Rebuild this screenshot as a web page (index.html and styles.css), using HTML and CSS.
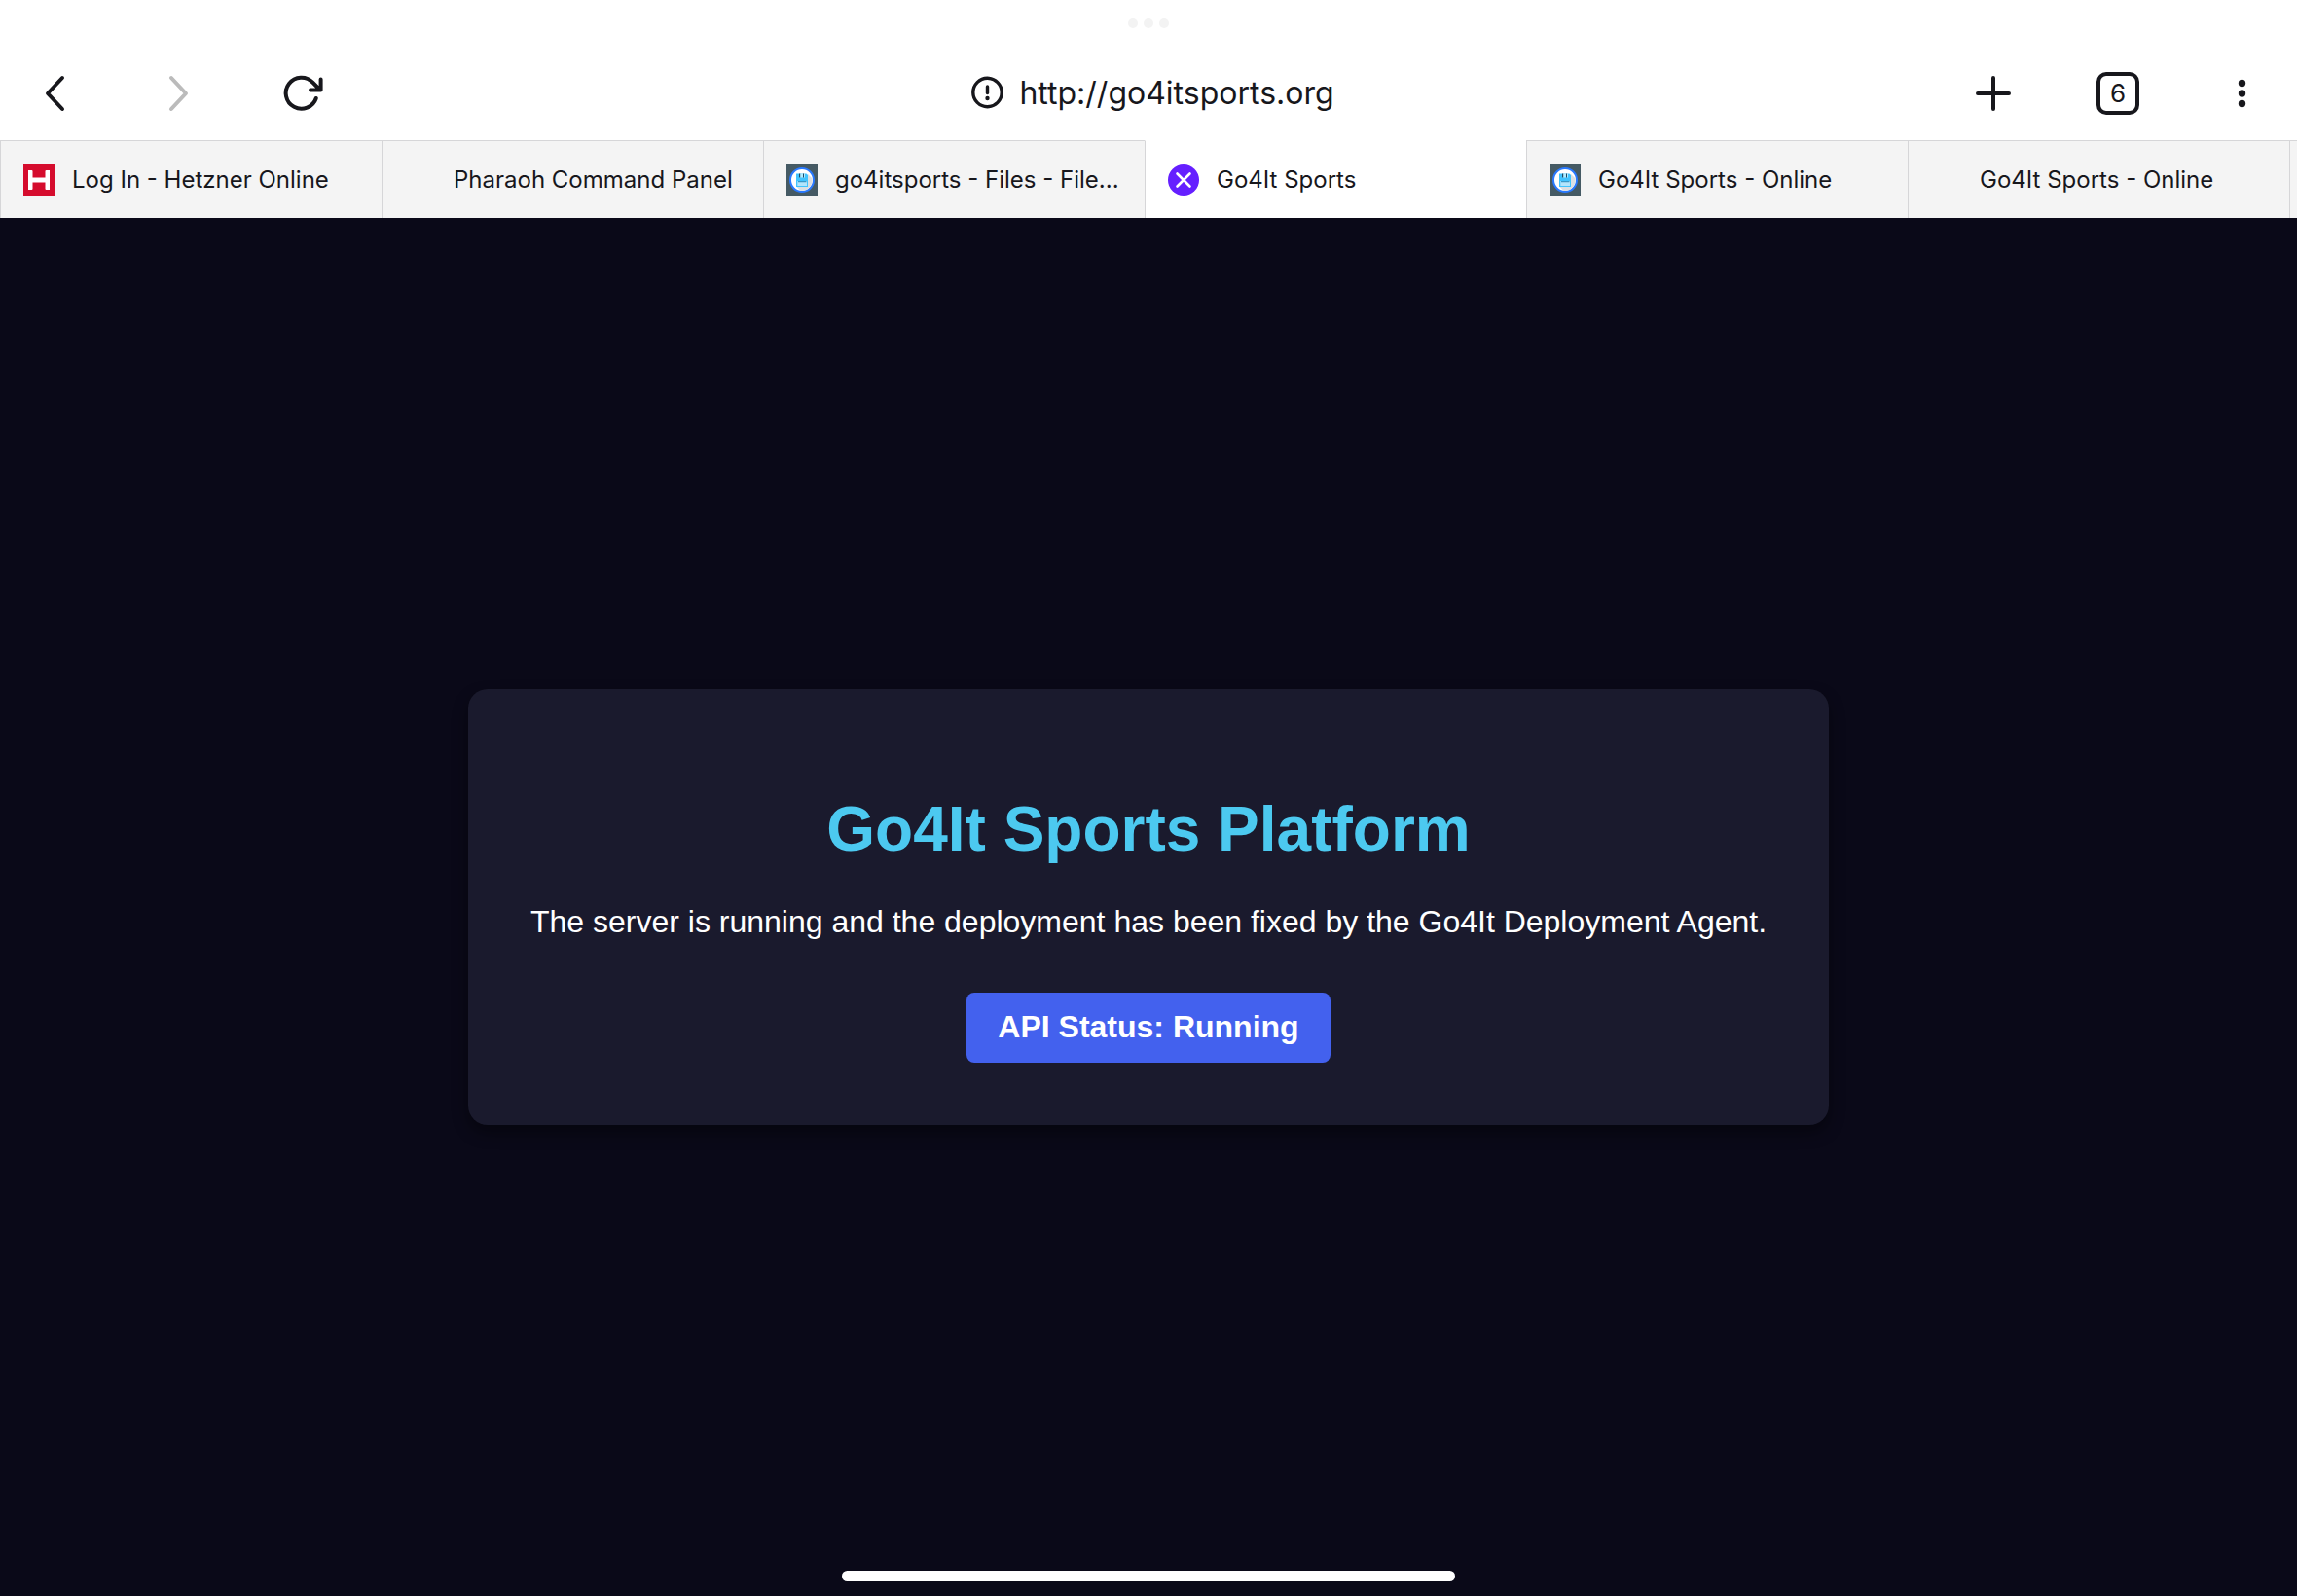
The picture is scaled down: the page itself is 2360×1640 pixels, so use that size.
FILE: index.html
```html
<!DOCTYPE html>
<html lang="en">
<head>
<meta charset="utf-8">
<meta name="viewport" content="width=device-width, initial-scale=1">
<title>Go4It Sports</title>
<link rel="stylesheet" href="styles.css">
</head>
<body>
<svg class="sprite" aria-hidden="true">
  <symbol id="disk" viewBox="0 0 32 32">
    <rect width="32" height="32" fill="#455a64"/>
    <circle cx="16" cy="16" r="12" fill="#fff" stroke="#2979ff" stroke-width="2"/>
    <path d="M22 10l4.600 4.600A11 11 0 0 1 14.500 26.900L10.500 22.900z" fill="#dcdfe2"/>
    <path d="M10 9.500h10.500L22 11V23H10z" fill="#40c4ff"/>
    <rect x="13" y="9.500" width="6" height="4" fill="#b3ecff"/>
    <rect x="13" y="9.500" width="1.200" height="4" fill="#1b4a66"/>
    <rect x="17" y="9.500" width="1" height="4" fill="#1b4a66"/>
    <rect x="11.300" y="17" width="9.700" height="5" fill="#b3e5fc"/>
    <rect x="12" y="17.200" width="8.500" height="1" fill="#1f86b8"/>
  </symbol>
</svg>

<header class="browser">
  <div class="grabber" aria-hidden="true"><span></span><span></span><span></span></div>

  <div class="toolbar">
    <nav class="tools" aria-label="Navigation">
      <button class="tool" type="button" aria-label="Back">
        <svg class="glyph" viewBox="0 0 48 48"><path d="M32 8L17 24L32 40"/></svg>
      </button>
      <button class="tool" type="button" aria-label="Forward" disabled>
        <svg class="glyph" viewBox="0 0 48 48"><path d="M16 8L31 24L16 40"/></svg>
      </button>
      <button class="tool" type="button" aria-label="Reload">
        <svg class="glyph" viewBox="0 0 48 48"><path d="M36.800 29A16 16 0 1 1 33.300 12.700L41 20.500M41.600 9.500V20.500H31"/></svg>
      </button>
    </nav>

    <button class="address" type="button">
      <svg class="info" viewBox="0 0 36 36" aria-hidden="true">
        <circle cx="17.500" cy="17" r="14.700" fill="none" stroke="currentColor" stroke-width="3.400"/>
        <path d="M17.500 11v6.500" stroke="currentColor" stroke-width="3.400" stroke-linecap="round"/>
        <circle cx="17.500" cy="23" r="2.200" fill="currentColor"/>
      </svg>
      <span>http://go4itsports.org</span>
    </button>

    <div class="tools tools-end">
      <button class="tool" type="button" aria-label="New tab">
        <svg class="glyph" viewBox="0 0 48 48"><path d="M24 8V40M8 24H40"/></svg>
      </button>
      <button class="tool" type="button" aria-label="Show 6 open tabs"><span class="count">6</span></button>
      <button class="tool" type="button" aria-label="Menu">
        <svg class="glyph glyph-solid" viewBox="0 0 48 48"><circle cx="23.500" cy="13.500" r="3.700"/><circle cx="23.500" cy="24" r="3.700"/><circle cx="23.500" cy="34.500" r="3.700"/></svg>
      </button>
    </div>
  </div>

  <div class="tabs" role="tablist">
    <button class="tab" type="button" role="tab">
      <svg class="favicon" viewBox="0 0 32 32" aria-hidden="true"><rect width="32" height="32" fill="#d50c2d"/><path d="M5 6h3.500q1 0 1 1v6.500h13V7q0-1 1-1H27v20h-3.500q-1 0-1-1v-6.500h-13V25q0 1-1 1H5z" fill="#fff"/></svg>
      <span class="label">Log In - Hetzner Online</span>
    </button>
    <button class="tab" type="button" role="tab">
      <span class="favicon"></span>
      <span class="label">Pharaoh Command Panel</span>
    </button>
    <button class="tab" type="button" role="tab">
      <svg class="favicon" aria-hidden="true"><use href="#disk"/></svg>
      <span class="label">go4itsports - Files - File...</span>
    </button>
    <button class="tab tab-active" type="button" role="tab" aria-selected="true">
      <svg class="favicon" viewBox="0 0 32 32" aria-hidden="true"><circle cx="16" cy="16" r="16" fill="#651fff"/><path d="M9.500 9.500L22.500 22.500M22.500 9.500L9.500 22.500" stroke="#fff" stroke-width="2.600" stroke-linecap="round"/></svg>
      <span class="label">Go4It Sports</span>
    </button>
    <button class="tab" type="button" role="tab">
      <svg class="favicon" aria-hidden="true"><use href="#disk"/></svg>
      <span class="label">Go4It Sports - Online</span>
    </button>
    <button class="tab" type="button" role="tab">
      <span class="favicon"></span>
      <span class="label">Go4It Sports - Online</span>
    </button>
    <span class="tab-rest"></span>
  </div>
</header>

<main class="page">
  <section class="card">
    <h1>Go4It Sports Platform</h1>
    <p>The server is running and the deployment has been fixed by the Go4It Deployment Agent.</p>
    <div class="status">API Status: Running</div>
  </section>
</main>
<div class="home-indicator" aria-hidden="true"></div>
</body>
</html>
```
FILE: styles.css
```css
* {
  box-sizing: border-box;
}

body {
  margin: 0;
  min-height: 100vh;
  display: flex;
  flex-direction: column;
  background: #0a0918;
  color: #fff;
  font-family: "Liberation Sans", Arial, sans-serif;
}

button {
  margin: 0;
  padding: 0;
  border: 0;
  background: none;
  color: inherit;
  font: inherit;
}

.sprite {
  display: none;
}

/* Browser chrome */
.browser {
  background: #fff;
  color: #17171c;
  font-family: Inter, sans-serif;
}

.grabber {
  height: 48px;
  display: flex;
  align-items: center;
  justify-content: center;
  gap: 6px;
}

.grabber span {
  width: 10px;
  height: 10px;
  border-radius: 50%;
  background: #f3f3f3;
}

.toolbar {
  height: 96px;
  padding: 0 16px;
  display: grid;
  grid-template-columns: 1fr auto 1fr;
  align-items: center;
}

.tools {
  display: flex;
  gap: 48px;
}

.tools-end {
  justify-content: flex-end;
}

.tool {
  width: 80px;
  height: 80px;
  display: flex;
  align-items: center;
  justify-content: center;
}

.tool:disabled {
  color: #bbb;
}

.glyph {
  width: 48px;
  height: 48px;
  fill: none;
  stroke: currentColor;
  stroke-width: 4;
  stroke-linecap: round;
  stroke-linejoin: round;
}

.glyph-solid {
  fill: currentColor;
  stroke: none;
}

.count {
  width: 44px;
  height: 44px;
  display: flex;
  align-items: center;
  justify-content: center;
  border: 4px solid;
  border-radius: 10px;
  font-size: 26px;
  line-height: 36px;
}

.address {
  padding-left: 8px;
  display: flex;
  align-items: center;
  gap: 14px;
  font-size: 32px;
  line-height: 48px;
}

.info {
  width: 36px;
  height: 36px;
}

/* Tab strip */
.tabs {
  height: 80px;
  display: flex;
  overflow: hidden;
}

.tab {
  flex: 0 0 392px;
  min-width: 0;
  padding: 0 24px 0 23px;
  display: flex;
  align-items: center;
  gap: 18px;
  border-top: 1px solid #d6d6d8;
  border-left: 1px solid #d6d6d8;
  background: #f4f4f4;
  font-size: 24px;
  line-height: 32px;
  text-align: left;
}

.tab-active {
  border-top-color: #fff;
  background: #fff;
}

.tab-rest {
  flex: 1;
  border-top: 1px solid #d6d6d8;
  border-left: 1px solid #d6d6d8;
  background: #f4f4f4;
}

.favicon {
  flex: none;
  width: 32px;
  height: 32px;
}

.label {
  min-width: 0;
  overflow: hidden;
  text-overflow: ellipsis;
  white-space: nowrap;
}

/* Status page */
.page {
  flex: 1;
  display: flex;
  align-items: center;
  justify-content: center;
}

.card {
  padding: 64px;
  border-radius: 20px;
  background: #1a1a2d;
  box-shadow: 0 8px 16px rgba(0, 0, 0, 0.4);
  text-align: center;
}

.card h1 {
  margin: 44px 0 40px;
  color: #4cc9f0;
  font-size: 64px;
  line-height: 72px;
}

.card p {
  margin: 0 0 54px;
  font-size: 32px;
  line-height: 38px;
}

.status {
  width: fit-content;
  margin: 0 auto;
  padding: 16px 32px 18px;
  border-radius: 8px;
  background: #4361ee;
  font-size: 32px;
  line-height: 38px;
  font-weight: 700;
}

.home-indicator {
  position: fixed;
  bottom: 15px;
  left: 50%;
  width: 630px;
  height: 11px;
  margin-left: -315px;
  border-radius: 6px;
  background: #fff;
}
```
